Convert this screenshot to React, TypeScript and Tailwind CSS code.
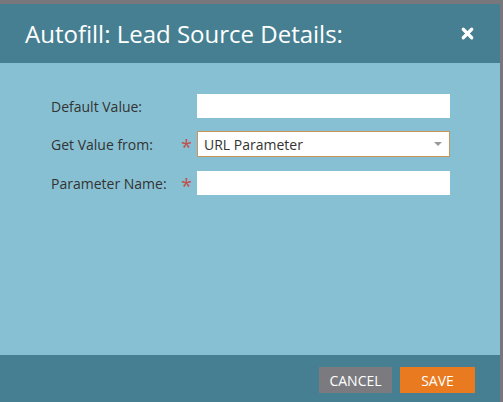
import { X } from "lucide-react"

const font = { fontFamily: '"Open Sans", "Noto Sans", sans-serif' }

function Row({ label, required, children }: { label: string; required?: boolean; children: React.ReactNode }) {
  return (
    <div className="flex items-center">
      <label className="w-[130px] text-[14px] text-[#333]">{label}</label>
      <span className="w-[16px] text-[20px] leading-none text-[#c0504d] pt-[6px]">{required ? "*" : ""}</span>
      {children}
    </div>
  )
}

export default function App() {
  return (
    <div className="w-[503px] h-[402px] bg-[#78777c] pt-[4px] pr-[3px] overflow-hidden" style={font}>
      <div className="flex flex-col h-full bg-[#87c0d2]">
        {/* header */}
        <header className="h-[59px] bg-[#467f91] flex items-center justify-between pl-[25px] pr-[24px]">
          <h1 className="text-[24px] text-white leading-none">Autofill: Lead Source Details:</h1>
          <button className="text-white">
            <X className="h-[17px] w-[17px]" strokeWidth={4.5} />
          </button>
        </header>

        {/* body */}
        <main className="flex-1 flex flex-col gap-[13px] pl-[51px] pt-[31px]">
          <Row label="Default Value:">
            <input className="w-[253px] h-[24px] bg-white outline-none" />
          </Row>
          <Row label="Get Value from:" required>
            <div className="w-[253px] h-[26px] bg-white border border-[#c99559] flex items-center justify-between pl-[6px] pr-[7px]">
              <span className="text-[14px] text-[#333]">URL Parameter</span>
              <span className="w-0 h-0 border-l-[4px] border-r-[4px] border-t-[4px] border-l-transparent border-r-transparent border-t-[#999]" />
            </div>
          </Row>
          <Row label="Parameter Name:" required>
            <input className="w-[253px] h-[24px] bg-white outline-none" />
          </Row>
        </main>

        {/* footer */}
        <footer className="h-[47px] bg-[#467f91] flex items-start justify-end gap-[8px] pt-[12px] pr-[25px]">
          <button className="w-[73px] h-[26px] bg-[#7b7a7f] text-white text-[14px]">CANCEL</button>
          <button className="w-[75px] h-[26px] bg-[#e97a1f] text-white text-[14px]">SAVE</button>
        </footer>
      </div>
    </div>
  )
}
